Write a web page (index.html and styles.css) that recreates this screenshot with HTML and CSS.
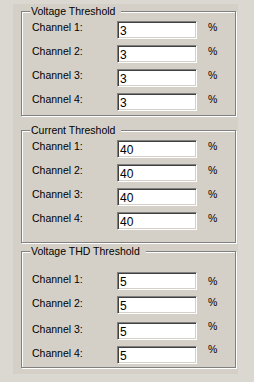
FILE: index.html
```html
<!DOCTYPE html>
<html lang="en">
<head>
    <meta charset="UTF-8">
    <title>Thresholds</title>
    <link rel="stylesheet" href="styles.css">
</head>
<body>

<div class="panel">
    <!-- Voltage -->
    <fieldset class="group first">
        <legend>Voltage Threshold</legend>
        <div class="row"><span class="label">Channel 1:</span><input class="field" value="3"><span class="unit">%</span></div>
        <div class="row"><span class="label">Channel 2:</span><input class="field" value="3"><span class="unit">%</span></div>
        <div class="row"><span class="label">Channel 3:</span><input class="field" value="3"><span class="unit">%</span></div>
        <div class="row"><span class="label">Channel 4:</span><input class="field" value="3"><span class="unit">%</span></div>
    </fieldset>

    <!-- Current -->
    <fieldset class="group second">
        <legend>Current Threshold</legend>
        <div class="row"><span class="label">Channel 1:</span><input class="field" value="40"><span class="unit">%</span></div>
        <div class="row"><span class="label">Channel 2:</span><input class="field" value="40"><span class="unit">%</span></div>
        <div class="row"><span class="label">Channel 3:</span><input class="field" value="40"><span class="unit">%</span></div>
        <div class="row"><span class="label">Channel 4:</span><input class="field" value="40"><span class="unit">%</span></div>
    </fieldset>

    <!-- THD -->
    <fieldset class="group thd">
        <legend>Voltage THD Threshold</legend>
        <div class="row"><span class="label">Channel 1:</span><input class="field" value="5"><span class="unit low">%</span></div>
        <div class="row"><span class="label">Channel 2:</span><input class="field" value="5"><span class="unit">%</span></div>
        <div class="row gap"><span class="label">Channel 3:</span><input class="field" value="5"><span class="unit up">%</span></div>
        <div class="row"><span class="label">Channel 4:</span><input class="field" value="5"><span class="unit top">%</span></div>
    </fieldset>
</div>

</body>
</html>
```

FILE: styles.css
```css
body {
    margin: 0;
    background-color: #dbd8d1;
    font-family: "Liberation Sans", Arial, sans-serif;
    font-size: 10.5px;
    color: #000;
}
.panel {
    width: 215px;
    height: 363px;
    margin: 4px 0 0 13px;
    padding: 1px 2px 6px 8px;
    background-color: #d4d0c8;
}
.group {
    margin: 0;
    padding: 0 0 1px 10px;
    min-width: 0;
    border: 1px solid #808080;
    box-shadow: 1px 1px 0 #fff, inset 1px 1px 0 #fff;
}
.group legend {
    margin-left: -2px;
    padding: 0 6px 0 1px;
    line-height: 13px;
    background-color: #d4d0c8;
}
.second {
    margin-top: 8px;
    padding-bottom: 9px;
}
.thd {
    margin-top: 2px;
    padding-top: 11px;
    padding-bottom: 0;
}
.row {
    display: flex;
    align-items: flex-start;
    height: 24px;
}
.row.gap {
    margin-top: 2px;
}
.label {
    width: 85px;
    margin-top: 3px;
    line-height: 13px;
}
.thd .label {
    margin-top: 4px;
}
.field {
    box-sizing: border-box;
    width: 80px;
    height: 18px;
    margin: 3px 0 0 0;
    padding: 1px 2px 0 2px;
    border: 1px solid;
    border-color: #808080 #fff #fff #808080;
    box-shadow: inset 1px 1px 0 #404040, inset -1px -1px 0 #d4d0c8;
    background-color: #fff;
    font-family: "Liberation Sans", Arial, sans-serif;
    font-size: 12px;
    color: #000;
    outline: none;
}
.unit {
    margin: 3px 0 0 11px;
    line-height: 13px;
}
.unit.low {
    margin-top: 6px;
}
.unit.up {
    margin-top: 1px;
}
.unit.top {
    margin-top: 0;
}
```
